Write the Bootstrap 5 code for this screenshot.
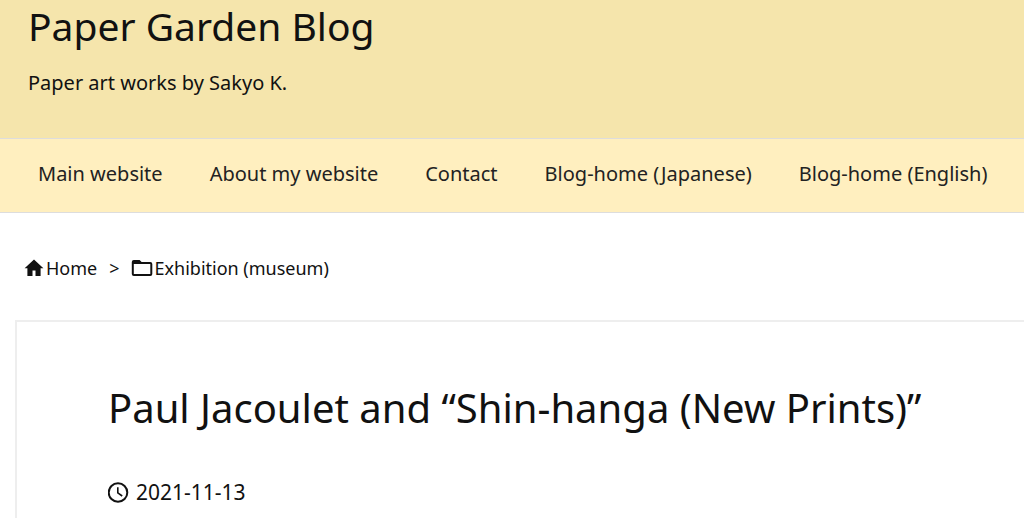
<!DOCTYPE html>
<html lang="en">
<head>
<meta charset="utf-8">
<meta name="viewport" content="width=device-width, initial-scale=1">
<title>Paper Garden Blog</title>
<link href="https://cdn.jsdelivr.net/npm/bootstrap@5.3.0/dist/css/bootstrap.min.css" rel="stylesheet">
<style>
body{font-family:"Noto Sans","DejaVu Sans",sans-serif;color:#111;background:#fff}
a{color:inherit;text-decoration:none}
svg{flex:none;fill:currentColor}
.site-head{background:#f5e5ac;padding:0 28px 41px}
.site-title,.post-title{font-size:40px;line-height:52px;font-weight:400;margin:0}
.site-title{font-size:39px}
.tagline{font-size:20px;line-height:28px;margin:17px 0 0}
.site-nav{background:#ffefbf;border-top:1px solid #ddd;border-bottom:1px solid #ddd;padding:20px 16px 23px 38px}
.site-nav .nav{column-gap:47px}
.site-nav .nav-link{color:#222;font-size:20px;line-height:30px;padding:0}
.crumbs{font-size:18px;line-height:28px;padding:41px 24px 38px}
.crumbs ol{gap:12px}
.crumbs li+li{display:flex;gap:11px}
.crumbs li+li::before{content:">"}
.crumbs a{display:flex;align-items:center;gap:2px}
.post{border:2px solid #eee;border-width:2px 0 0 2px;margin-left:15px;padding:60px 40px 8px 91px}
.post-date{font-size:21px;line-height:28px;margin-top:44px;gap:7px}
</style>
</head>
<body class="d-flex flex-column min-vh-100">
<header class="site-head">
  <h1 class="site-title"><a href="#">Paper Garden Blog</a></h1>
  <p class="tagline">Paper art works by Sakyo K.</p>
</header>
<nav class="site-nav" aria-label="Main">
  <ul class="nav">
    <li class="nav-item"><a class="nav-link" href="#">Main website</a></li>
    <li class="nav-item"><a class="nav-link" href="#">About my website</a></li>
    <li class="nav-item"><a class="nav-link" href="#">Contact</a></li>
    <li class="nav-item"><a class="nav-link" href="#">Blog-home (Japanese)</a></li>
    <li class="nav-item"><a class="nav-link" href="#">Blog-home (English)</a></li>
  </ul>
</nav>
<nav class="crumbs" aria-label="Breadcrumb">
  <ol class="list-unstyled d-flex flex-wrap m-0">
    <li><a href="#"><svg width="20" height="20" viewBox="0 0 20 20" aria-hidden="true"><path d="M10 1.500.6 10.300h2.800V18h5.100v-5.500h3V18h5.100v-7.700h2.800z"/></svg>Home</a></li>
    <li><a href="#"><svg width="22" height="20" viewBox="0 0 22 20" aria-hidden="true"><path fill-rule="evenodd" d="M2.800 2h5.800l2 2h8.700a2 2 0 0 1 2 2v10a2 2 0 0 1-2 2H2.800a2 2 0 0 1-2-2V4a2 2 0 0 1 2-2zM2.800 6v10h16.500V6z"/></svg>Exhibition (museum)</a></li>
  </ol>
</nav>
<article class="post flex-grow-1">
  <h2 class="post-title">Paul Jacoulet and “Shin-hanga (New Prints)”</h2>
  <div class="post-date d-flex align-items-center">
    <svg width="21" height="21" viewBox="0 0 21 21" aria-hidden="true"><g fill="none" stroke="currentColor"><circle cx="10" cy="10.500" r="9.300" stroke-width="2"/><path d="M9.800 5.200v5.700l4.400 3.100" stroke-width="1.600"/></g></svg>
    <time datetime="2021-11-13">2021-11-13</time>
  </div>
</article>
<script src="https://cdn.jsdelivr.net/npm/bootstrap@5.3.0/dist/js/bootstrap.bundle.min.js"></script>
</body>
</html>
